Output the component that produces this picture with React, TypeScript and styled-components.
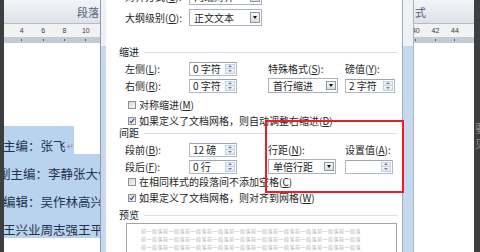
import React from 'react';
import styled, { createGlobalStyle } from 'styled-components';

const CJK = `"Noto Sans CJK SC", "Noto Sans", sans-serif`;

const GlobalStyle = createGlobalStyle`
  html, body { margin: 0; padding: 0; background: #ffffff; }
  body { width: 480px; height: 252px; overflow: hidden; font-family: ${CJK}; }
  #root { width: 480px; height: 252px; }
`;

const Screen = styled.div`
  position: relative;
  width: 480px;
  height: 252px;
  display: flex;
  overflow: hidden;
  background: #fff;
  font-family: ${CJK};
`;

const DarkEdge = styled.div<{ $w: number }>`
  flex: none;
  width: ${p => p.$w}px;
  background: #3d3e40;
  display: flex;
  flex-direction: column;
  overflow: hidden;
`;

const EdgeGlyph = styled.span<{ $mt: number }>`
  margin-top: ${p => p.$mt}px;
  margin-left: 1px;
  font-size: 11px;
  line-height: 13px;
  color: #8d8d8d;
  white-space: nowrap;
`;

const DocPane = styled.div<{ $w: number }>`
  flex: none;
  width: ${p => p.$w}px;
  display: flex;
  flex-direction: column;
  overflow: hidden;
  background: #fff;
`;

const Ribbon = styled.div<{ $align: 'start' | 'end' }>`
  flex: none;
  height: 23px;
  display: flex;
  align-items: center;
  justify-content: ${p => (p.$align === 'end' ? 'flex-end' : 'flex-start')};
  padding: 0 1px;
  background: linear-gradient(#f2f4f7, #dde2e8);
  border-bottom: 1px solid #b4bcc7;
  font-size: 11px;
  color: #556072;
  white-space: nowrap;
`;

const Ruler = styled.div`
  flex: none;
  height: 19px;
  overflow: hidden;
  background: linear-gradient(#f1f2f4 0 13px, #c5cbd2 13px);
`;

const RulerTrack = styled.div<{ $shift: number; $step: number }>`
  margin-left: ${p => p.$shift}px;
  height: 100%;
  display: grid;
  grid-auto-flow: column;
  grid-auto-columns: ${p => p.$step}px;
  justify-content: start;
`;

const RulerCell = styled.div`
  display: flex;
  flex-direction: column;
  align-items: center;
`;

const RulerNum = styled.span`
  height: 13px;
  font-family: "Liberation Sans", Arial, sans-serif;
  font-size: 7px;
  line-height: 14px;
  color: #3a3a3a;
`;

const RulerTick = styled.span`
  width: 1px;
  height: 2px;
  margin-top: 2px;
  background: #5c6068;
`;

const PageBody = styled.div<{ $top: number }>`
  flex: 1;
  padding-top: ${p => p.$top}px;
  display: flex;
  flex-direction: column;
`;

const HL = '#b9d3ef';

const DocLine = styled.div<{ $full?: boolean }>`
  flex: none;
  height: 28px;
  display: flex;
  align-items: flex-end;
  background: ${p => (p.$full ? HL : 'transparent')};
  white-space: nowrap;
  overflow: hidden;
`;

const DocText = styled.span<{ $shift: number; $hl?: boolean }>`
  height: 100%;
  display: flex;
  align-items: flex-end;
  margin-left: ${p => p.$shift}px;
  background: ${p => (p.$hl ? HL : 'transparent')};
  font-size: 12.5px;
  line-height: 16px;
  color: #22314d;
`;

const ReturnMark = styled.span`
  font-size: 8px;
  line-height: 10px;
  margin: 0 0 3px 1px;
  color: #7d8590;
`;

const FrameEdge = styled.div<{ $w: number; $side: 'left' | 'right' }>`
  flex: none;
  width: ${p => p.$w}px;
  box-sizing: border-box;
  ${p => (p.$side === 'left' ? 'border-left: 1px solid #8f9bab;' : 'border-right: 1px solid #a9b4c2;')}
  background: linear-gradient(#eef2f7 0 46px, #c6d8ee 46px);
`;

const Dialog = styled.div`
  flex: none;
  width: 297px;
  box-sizing: border-box;
  border-right: 1px solid #a2abb7;
  background: #fff;
  display: flex;
  flex-direction: column;
  overflow: hidden;
  font-size: 10px;
  line-height: 12px;
  color: #1e1e1e;
`;

const FieldRow = styled.div<{ $mt: number }>`
  flex: none;
  height: 17px;
  margin-top: ${p => p.$mt}px;
  padding-left: 19px;
  display: flex;
  align-items: center;
`;

const Label = styled.span<{ $w?: number }>`
  flex: none;
  width: ${p => (p.$w ? `${p.$w}px` : 'auto')};
  white-space: nowrap;
  color: #262626;
`;

const Mn = styled.span`
  text-decoration: underline;
  text-underline-offset: 1px;
`;

const Section = styled.div<{ $mt: number }>`
  flex: none;
  height: 12px;
  margin-top: ${p => p.$mt}px;
  padding: 0 5px 0 13px;
  display: flex;
  align-items: center;
  gap: 5px;
  color: #0f1a30;
  white-space: nowrap;
`;

const SectionRule = styled.span`
  flex: 1;
  height: 1px;
  background: #d8dfe7;
`;

const FormGrid = styled.div<{ $mt: number }>`
  flex: none;
  margin-top: ${p => p.$mt}px;
  padding-left: 19px;
  display: grid;
  grid-template-columns: 64px 79px 77px 50px;
  grid-template-rows: 17px 17px;
  align-items: center;
`;

const SpinBox = styled.div<{ $w: number }>`
  width: ${p => p.$w}px;
  height: 14px;
  box-sizing: border-box;
  border: 1px solid #b1bac6;
  border-top-color: #9ba4b0;
  background: #fff;
  display: flex;
`;

const SpinValue = styled.span`
  flex: 1;
  padding-left: 3px;
  display: flex;
  align-items: center;
  white-space: nowrap;
  font-size: 10px;
  color: #1e1e1e;
`;

const SpinButtons = styled.span`
  flex: none;
  width: 10px;
  padding: 1px 1px 1px 0;
  display: flex;
  flex-direction: column;
`;

const SpinButton = styled.span<{ $dir: 'up' | 'down' }>`
  flex: 1;
  display: flex;
  align-items: center;
  justify-content: center;
  background: linear-gradient(#f6f8fb, #dfe7f1);
  border: 1px solid #c6d1de;
  ${p => (p.$dir === 'down' ? 'border-top: none;' : '')}
  &::after {
    content: '';
    border-left: 2px solid transparent;
    border-right: 2px solid transparent;
    ${p => (p.$dir === 'up' ? 'border-bottom: 2px solid #6780a6;' : 'border-top: 2px solid #6780a6;')}
  }
`;

const SelectBox = styled.div<{ $w: number; $h: number }>`
  width: ${p => p.$w}px;
  height: ${p => p.$h}px;
  box-sizing: border-box;
  border: 1px solid #a9b1bc;
  background: #fff;
  display: flex;
  align-items: center;
  padding: 1px 1px 1px 4px;
  white-space: nowrap;
  color: #1e1e1e;
`;

const DropButton = styled.span`
  margin-left: auto;
  flex: none;
  width: 10px;
  align-self: stretch;
  margin-top: 1px;
  margin-bottom: 1px;
  box-sizing: border-box;
  border: 1px solid #8e97a4;
  background: linear-gradient(#f8f8f8, #dcdcdc);
  display: flex;
  align-items: center;
  justify-content: center;
  &::after {
    content: '';
    border-left: 2.5px solid transparent;
    border-right: 2.5px solid transparent;
    border-top: 3px solid #111;
  }
`;

const CheckRow = styled.div<{ $mt: number }>`
  flex: none;
  height: 12px;
  margin-top: ${p => p.$mt}px;
  padding-left: 22px;
  display: flex;
  align-items: center;
  gap: 3px;
  white-space: nowrap;
  color: #262626;
`;

const CheckBox = styled.span`
  flex: none;
  width: 8px;
  height: 8px;
  box-sizing: border-box;
  border: 1px solid #8e9093;
  background: linear-gradient(135deg, #d6d6d6, #f8f8f8);
  display: flex;
  align-items: center;
  justify-content: center;
  overflow: visible;
`;

const PreviewBox = styled.div`
  flex: none;
  margin: 2px 0 0 20px;
  width: 271px;
  height: 40px;
  box-sizing: border-box;
  border: 1px solid #a4a4a4;
  padding: 3px 0 0 14px;
  display: flex;
  flex-direction: column;
`;

const PreviewLine = styled.span`
  width: 222px;
  overflow: hidden;
  font-size: 5px;
  line-height: 8px;
  letter-spacing: 0.5px;
  color: #b0b0b0;
  white-space: nowrap;
`;

const Highlight = styled.div`
  position: absolute;
  left: 265px;
  top: 120px;
  width: 139px;
  height: 73px;
  box-sizing: border-box;
  border: 2px solid #ec1d24;
  pointer-events: none;
`;

const Spin: React.FC<{ w: number; value?: string }> = ({ w, value }) => (
  <SpinBox $w={w}>
    <SpinValue>{value}</SpinValue>
    <SpinButtons>
      <SpinButton $dir="up" />
      <SpinButton $dir="down" />
    </SpinButtons>
  </SpinBox>
);

const Select: React.FC<{ w: number; h: number; value: string }> = ({ w, h, value }) => (
  <SelectBox $w={w} $h={h}>
    {value}
    <DropButton />
  </SelectBox>
);

const Check: React.FC<{ checked?: boolean; children: React.ReactNode; mt: number }> = ({ checked, children, mt }) => (
  <CheckRow $mt={mt}>
    <CheckBox>
      {checked && (
        <svg width="8" height="8" viewBox="0 0 8 8">
          <path d="M1.2 4.1 L3.1 6.1 L6.8 1.2" fill="none" stroke="#22419b" strokeWidth="1.4" />
        </svg>
      )}
    </CheckBox>
    <span>{children}</span>
  </CheckRow>
);

const L: React.FC<{ t: string; k: string; colon?: boolean; w?: number }> = ({ t, k, colon = true, w }) => (
  <Label $w={w}>
    {t}(<Mn>{k}</Mn>){colon ? ':' : ''}
  </Label>
);

const previewText = '前一段落前一段落前一段落前一段落前一段落前一段落前一段落前一段落前一段落前一段落';

export default function App() {
  return (
    <>
      <GlobalStyle />
      <Screen>
        <DarkEdge $w={4} />
        <DocPane $w={96}>
          <Ribbon $align="end">段落</Ribbon>
          <Ruler>
            <RulerTrack $shift={7} $step={21.4}>
              {['4', '6', '8', '10'].map(n => (
                <RulerCell key={n}>
                  <RulerNum>{n}</RulerNum>
                  <RulerTick />
                </RulerCell>
              ))}
            </RulerTrack>
          </Ruler>
          <PageBody $top={83}>
            <DocLine>
              <DocText $shift={-1} $hl>
                主编：张飞<ReturnMark>↵</ReturnMark>
              </DocText>
            </DocLine>
            <DocLine $full>
              <DocText $shift={-6}>副主编：李静张大伟</DocText>
            </DocLine>
            <DocLine $full>
              <DocText $shift={-1}>编辑：吴作林高兴</DocText>
            </DocLine>
            <DocLine $full>
              <DocText $shift={-1}>王兴业周志强王平</DocText>
            </DocLine>
          </PageBody>
        </DocPane>
        <FrameEdge $w={6} $side="left" />
        <Dialog>
          <FieldRow $mt={-12}>
            <L t="对齐方式" k="G" w={64} />
            <Select w={73} h={16} value="两端对齐" />
          </FieldRow>
          <FieldRow $mt={4}>
            <L t="大纲级别" k="O" w={64} />
            <Select w={73} h={17} value="正文文本" />
          </FieldRow>

          <Section $mt={20}>
            缩进
            <SectionRule />
          </Section>
          <FormGrid $mt={2}>
            <L t="左侧" k="L" />
            <Spin w={48} value="0 字符" />
            <L t="特殊格式" k="S" />
            <L t="磅值" k="Y" />
            <L t="右侧" k="R" />
            <Spin w={48} value="0 字符" />
            <Select w={70} h={15} value="首行缩进" />
            <Spin w={50} value="2 字符" />
          </FormGrid>
          <Check mt={5}>
            对称缩进(<Mn>M</Mn>)
          </Check>
          <Check mt={4} checked>
            如果定义了文档网格，则自动调整右缩进(<Mn>D</Mn>)
          </Check>

          <Section $mt={0}>
            间距
            <SectionRule />
          </Section>
          <FormGrid $mt={2}>
            <L t="段前" k="B" />
            <Spin w={48} value="12 磅" />
            <L t="行距" k="N" />
            <L t="设置值" k="A" />
            <L t="段后" k="F" />
            <Spin w={48} value="0 行" />
            <Select w={68} h={15} value="单倍行距" />
            <Spin w={48} value="" />
          </FormGrid>
          <Check mt={1}>
            在相同样式的段落间不添加空格(<Mn>C</Mn>)
          </Check>
          <Check mt={4} checked>
            如果定义了文档网格，则对齐到网格(<Mn>W</Mn>)
          </Check>

          <Section $mt={5}>
            预览
            <SectionRule />
          </Section>
          <PreviewBox>
            <PreviewLine>{previewText}</PreviewLine>
            <PreviewLine>{previewText}</PreviewLine>
            <PreviewLine>{previewText}</PreviewLine>
          </PreviewBox>
        </Dialog>
        <FrameEdge $w={11} $side="right" />
        <DocPane $w={60}>
          <Ribbon $align="start">式</Ribbon>
          <Ruler>
            <RulerTrack $shift={-8} $step={19.6}>
              {['40', '42', '44'].map(n => (
                <RulerCell key={n}>
                  <RulerNum>{n}</RulerNum>
                  <RulerTick />
                </RulerCell>
              ))}
            </RulerTrack>
          </Ruler>
          <PageBody $top={0} />
        </DocPane>
        <DarkEdge $w={6}>
          <EdgeGlyph $mt={122}>要</EdgeGlyph>
          <EdgeGlyph $mt={2}>见</EdgeGlyph>
        </DarkEdge>
        <Highlight />
      </Screen>
    </>
  );
}
